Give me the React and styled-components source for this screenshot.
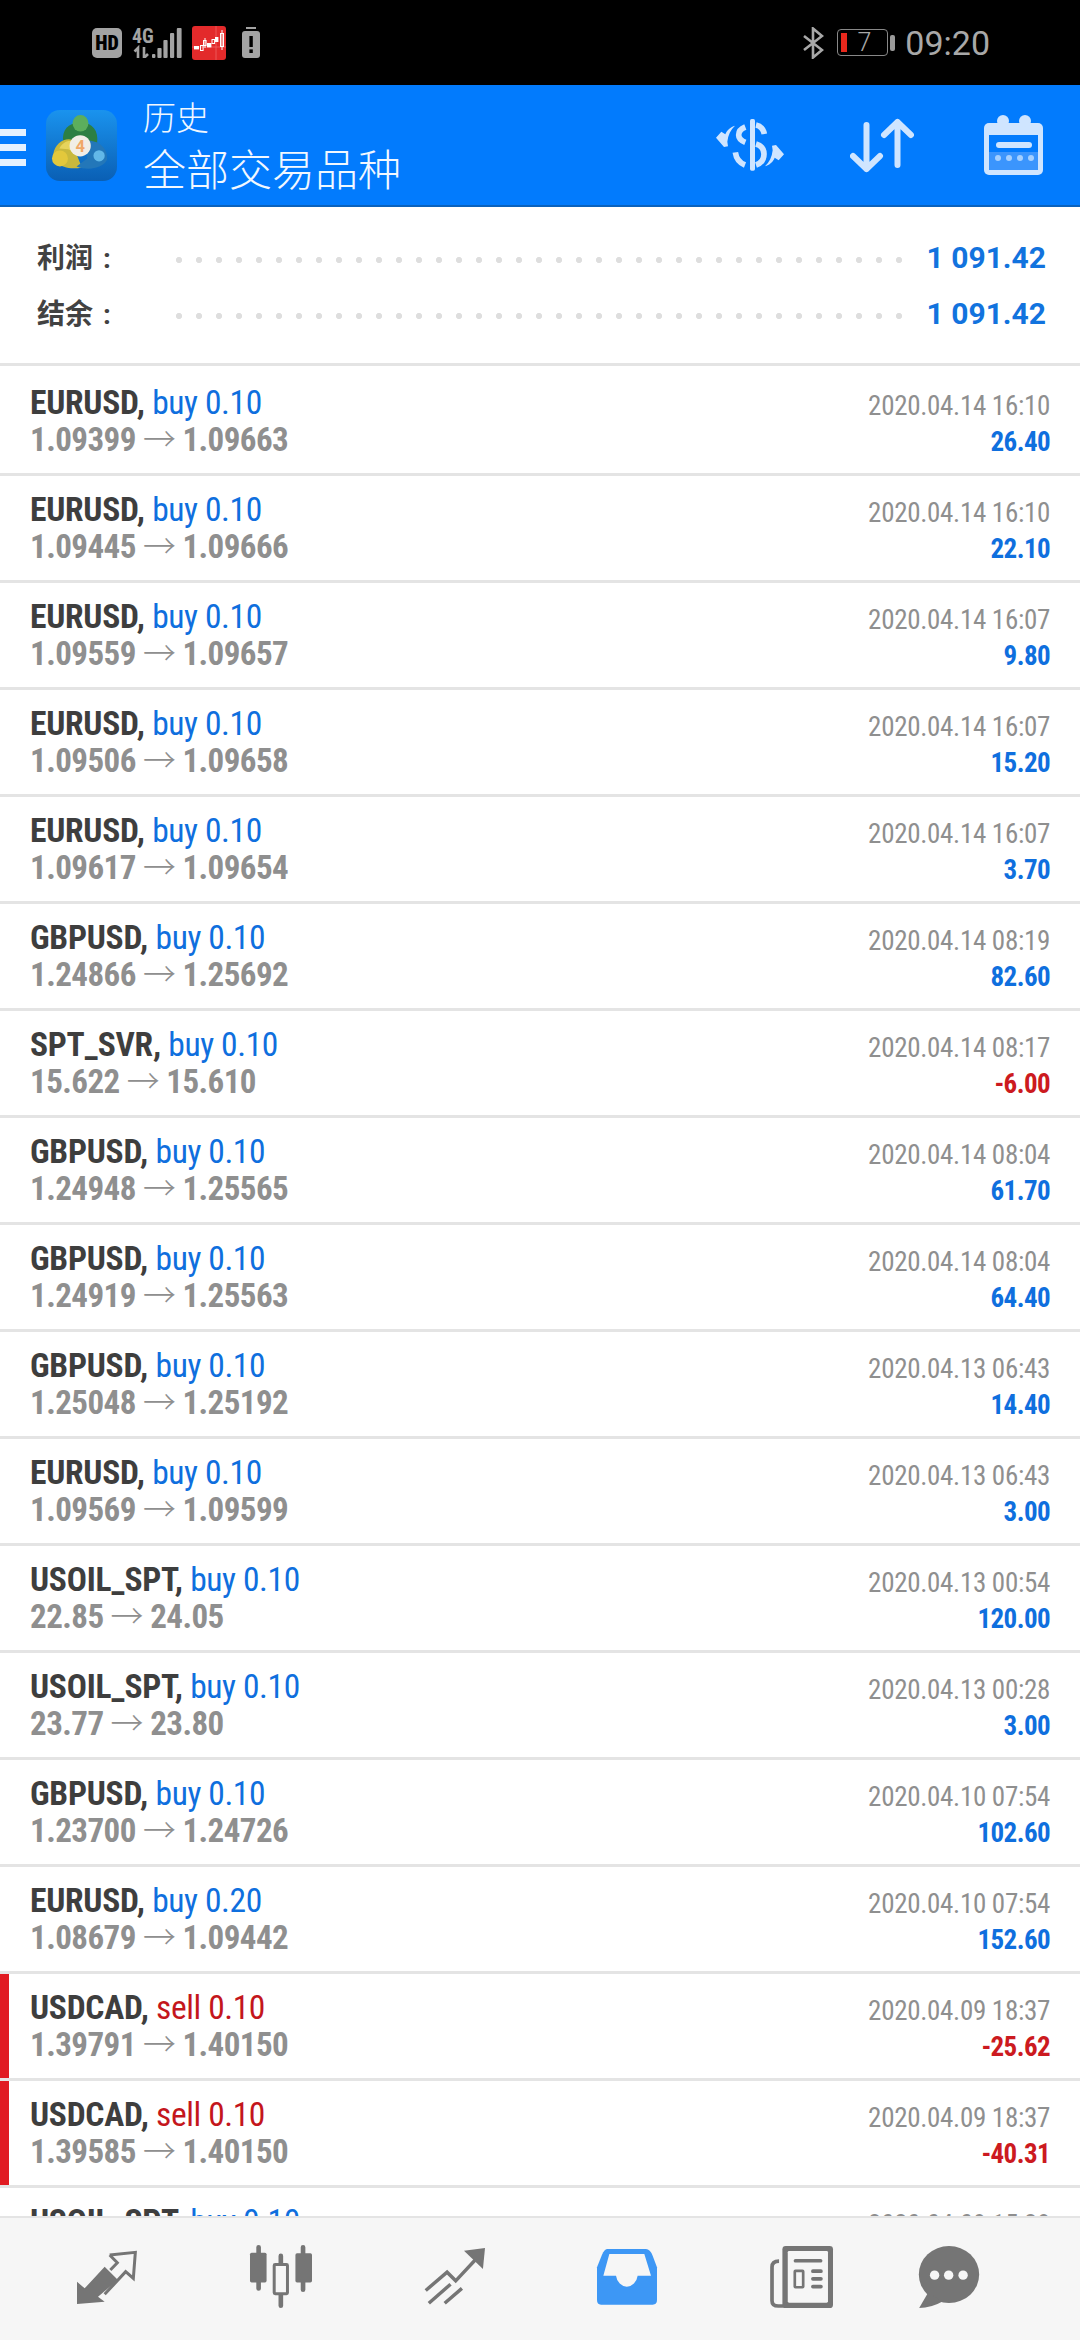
import React from "react";
import styled, { createGlobalStyle } from "styled-components";

const Global = createGlobalStyle`
  html, body { margin: 0; padding: 0; background: #fff; }
  * { box-sizing: border-box; }
`;
const SANS = `Roboto, "Noto Sans CJK SC", sans-serif`;
const HEAD_ICON = "#cfe5ff";
const NAV_GREY = "#757575";
const NAV_BG = "#f6f6f6";
const STATUS_GREY = "#a3a3a3";

const Page = styled.div`
  width: 1080px; height: 2340px; display: flex; flex-direction: column;
  overflow: hidden; background: #fff; font-family: ${SANS};
`;
const StatusBar = styled.div`
  height: 85px; flex: none; background: #000; display: flex; align-items: center;
  justify-content: space-between; padding: 0 90px 0 92px;
`;
const StatusGroup = styled.div`display: flex; align-items: center;`;
const HdBadge = styled.span`
  width: 30px; height: 30px; border-radius: 5px; background: ${STATUS_GREY}; color: #000; margin-right: 10px;
  display: flex; align-items: center; justify-content: center; font-size: 20px; line-height: 1;
  font-weight: 900; font-stretch: 85%;
`;
const Glyph = styled.svg`display: block; flex: none; margin-right: ${p => p.$mr || 0}px; margin-left: ${p => p.$ml || 0}px;`;
const BatteryBody = styled.div`
  width: 51px; height: 27px; border: 1.5px solid #888; border-radius: 4px; padding: 3px; display: flex; align-items: stretch;
`;
const BatteryFill = styled.i`width: 6px; background: #e8281c; display: block; flex: none;`;
const BatteryText = styled.span`
  flex: 1; text-align: center; margin-right: 3px; font-size: 25px; line-height: 19px; font-weight: 300; color: #a8a8a8;
`;
const BatteryTip = styled.i`display: block; width: 5px; height: 16px; margin: 0 10px 0 2px; border-radius: 2px; background: #9a9a9a;`;
const Clock = styled.span`font-size: 34px; color: #a8a8a8; line-height: 1;`;

const Header = styled.header`
  height: 122px; flex: none; background: #027bfd; border-bottom: 2px solid #0a62bd;
  display: flex; align-items: center; color: #fff; padding-right: 37px;
`;
const Burger = styled.div`
  width: 26px; height: 37px; margin: 5px 20px 0 0; display: flex; flex-direction: column; flex: none;
  justify-content: space-between; span { display: block; height: 7px; background: #e4f1ff; }
`;
const LogoSvg = styled.svg`display: block; flex: none; margin-right: 26px;`;
const TitleBlock = styled.div`flex: 1; display: flex; flex-direction: column; padding-top: 6px;`;
const TitleSmall = styled.div`font-size: 33px; line-height: 42px; font-weight: 300; color: #f0f7ff;`;
const TitleBig = styled.div`font-size: 43px; line-height: 54px; margin-top: 4px; font-weight: 300; color: #f2f8ff;`;

const Summary = styled.section`
  height: 156px; flex: none; padding: 22px 0 0 37px; display: flex; flex-direction: column;
`;
const SumRow = styled.div`height: 56px; display: flex; align-items: center;`;
const SumLabel = styled.div`
  width: 132px; flex: none; margin-bottom: 2px; font-size: 28px; font-weight: 700; word-spacing: 3px; color: #424242;
`;
const Dots = styled.div`
  width: 740px; flex: none; height: 6px; margin-top: 6px;
  background-image: radial-gradient(circle, #dedede 2.8px, transparent 3.3px);
  background-size: 20px 6px; background-repeat: repeat-x;
`;
const SumValue = styled.div`
  flex: 1; text-align: right; padding-right: 34px; font-size: 30px; font-weight: 700; color: #1273de;
`;
const List = styled.div`
  flex: 1; min-height: 0; overflow: hidden; border-top: 3px solid #e4e4e4; padding-top: 3px;
`;
const Row = styled.div`
  height: 107px; position: relative; border-bottom: 3px solid #e4e4e4; padding: 0 30px;
  display: flex; justify-content: space-between;
`;
const SellMark = styled.i`position: absolute; left: 0; top: 0; bottom: 0; width: 9px; background: #e11b22;`;
const Col = styled.div`display: flex; flex-direction: column; padding-top: 15px;`;
const RightCol = styled(Col)`align-items: flex-end; padding-top: 20px;`;
const Line1 = styled.div`
  font-size: 33.5px; line-height: 38px; font-stretch: 75%; font-weight: 700; letter-spacing: -0.25px;
  color: #3e3e3e; white-space: nowrap;
`;
const Side = styled.span`font-weight: 400; letter-spacing: -0.4px; color: ${p => p.$sell ? "#c4161c" : "#0f6fde"};`;
const Prices = styled.div`
  font-size: 33px; line-height: 36px; font-stretch: 75%; font-weight: 700; letter-spacing: -0.55px;
  color: #8f8f8f; white-space: nowrap;
`;
const Arrow = styled.span`font-weight: 300;`;
const DateText = styled.div`font-size: 27px; line-height: 34px; font-stretch: 75%; letter-spacing: -0.3px; color: #8f8f8f;`;
const Amount = styled.div`
  font-size: 27px; line-height: 38px; font-stretch: 75%; font-weight: 700; letter-spacing: -0.6px;
  color: ${p => p.$neg ? "#cc1a20" : "#0f6fde"};
`;
const Nav = styled.nav`
  height: 124px; flex: none; background: ${NAV_BG}; border-top: 2px solid #e4e4e4;
  display: flex; align-items: center; padding: 0 0 5px 76px; gap: 111px;
`;

const trades = [
 ["EURUSD","buy","0.10","1.09399","1.09663","2020.04.14 16:10","26.40"],
 ["EURUSD","buy","0.10","1.09445","1.09666","2020.04.14 16:10","22.10"],
 ["EURUSD","buy","0.10","1.09559","1.09657","2020.04.14 16:07","9.80"],
 ["EURUSD","buy","0.10","1.09506","1.09658","2020.04.14 16:07","15.20"],
 ["EURUSD","buy","0.10","1.09617","1.09654","2020.04.14 16:07","3.70"],
 ["GBPUSD","buy","0.10","1.24866","1.25692","2020.04.14 08:19","82.60"],
 ["SPT_SVR","buy","0.10","15.622","15.610","2020.04.14 08:17","-6.00"],
 ["GBPUSD","buy","0.10","1.24948","1.25565","2020.04.14 08:04","61.70"],
 ["GBPUSD","buy","0.10","1.24919","1.25563","2020.04.14 08:04","64.40"],
 ["GBPUSD","buy","0.10","1.25048","1.25192","2020.04.13 06:43","14.40"],
 ["EURUSD","buy","0.10","1.09569","1.09599","2020.04.13 06:43","3.00"],
 ["USOIL_SPT","buy","0.10","22.85","24.05","2020.04.13 00:54","120.00"],
 ["USOIL_SPT","buy","0.10","23.77","23.80","2020.04.13 00:28","3.00"],
 ["GBPUSD","buy","0.10","1.23700","1.24726","2020.04.10 07:54","102.60"],
 ["EURUSD","buy","0.20","1.08679","1.09442","2020.04.10 07:54","152.60"],
 ["USDCAD","sell","0.10","1.39791","1.40150","2020.04.09 18:37","-25.62"],
 ["USDCAD","sell","0.10","1.39585","1.40150","2020.04.09 18:37","-40.31"],
 ["USOIL_SPT","buy","0.10","23.00","23.50","2020.04.09 15:28","5.00"],
];

const NetIcon = () => (
  <Glyph width="50" height="30" viewBox="0 0 50 30" $mr={10}>
    <text x="0" y="15" fontFamily="Roboto" fontWeight="700" fontSize="20" fontStretch="75%" fill={STATUS_GREY}>4G</text>
    <g stroke={STATUS_GREY} strokeWidth="2.6" fill="none">
      <path d="M6 30V20L2.5 23.5" />
      <path d="M12 19V30L16 26" />
    </g>
    <g fill={STATUS_GREY}>
      <rect x="20" y="26" width="3.4" height="4" rx="1" />
      <rect x="25.4" y="20" width="4.2" height="10" rx="1" />
      <rect x="31.4" y="12" width="4.2" height="18" rx="1" />
      <rect x="38" y="5" width="4.2" height="25" rx="1" />
      <rect x="44.8" y="0" width="4.8" height="30" rx="1" />
    </g>
  </Glyph>
);
const ChartAppIcon = () => (
  <Glyph width="34" height="34" viewBox="0 0 34 34" $mr={16}>
    <rect width="34" height="34" rx="3" fill="#e32a2b" />
    <path d="M0 21H34M24 0V34" stroke="#ef6a6a" strokeWidth="0.7" />
    <g fill="#fff">
      <rect x="2" y="20" width="5" height="3.4" />
      <rect x="15" y="17" width="4.4" height="4.4" />
      <rect x="23" y="11" width="3.4" height="5" />
    </g>
    <g fill="none" stroke="#fff" strokeWidth="1">
      <rect x="8.5" y="19.5" width="2.6" height="5" />
      <rect x="11.5" y="14.5" width="2.6" height="5" />
      <rect x="20" y="13.5" width="2.6" height="4" />
      <rect x="28.5" y="7.5" width="3" height="13" />
      <path d="M30 4V24M13 12V22" />
    </g>
  </Glyph>
);
const SaverIcon = () => (
  <Glyph width="18" height="31" viewBox="0 0 18 31">
    <rect x="4" y="0" width="10" height="2" fill={STATUS_GREY} />
    <rect x="0" y="4" width="18" height="27" rx="3" fill={STATUS_GREY} />
    <rect x="7.4" y="9" width="3.4" height="11" fill="#000" />
    <rect x="7.4" y="22.4" width="3.4" height="3.6" fill="#000" />
  </Glyph>
);
const BluetoothIcon = () => (
  <Glyph width="22" height="32" viewBox="0 0 22 32" $mr={13}>
    <path d="M2 9L20 23L11 30.5V1.5L20 9L2 23" fill="none" stroke="#a8a8a8" strokeWidth="2.6" />
  </Glyph>
);
const Logo = () => (
  <LogoSvg width="71" height="71" viewBox="138 32 214 214">
    <defs>
      <linearGradient id="logoBg" x1="0" y1="0" x2="0" y2="1">
        <stop offset="0" stopColor="#1a93ee" />
        <stop offset="1" stopColor="#0a5fb4" />
      </linearGradient>
    </defs>
    <rect x="138" y="32" width="214" height="214" rx="42" fill="url(#logoBg)" />
    <path d="M190 128C184 88 212 68 242 72C272 68 298 90 292 132L262 140H222Z" fill="#2c7f43" />
    <ellipse cx="242" cy="72" rx="24" ry="25" fill="#5cae5c" />
    <path d="M160 165C165 128 205 108 228 128L232 170L246 205C215 212 185 205 172 190Z" fill="#c9b93c" />
    <path d="M178 148C190 126 210 120 222 130L226 160L205 150Z" fill="#e6d45c" />
    <circle cx="180" cy="178" r="24" fill="#e3c83c" />
    <path d="M262 125C298 122 326 150 322 182C310 208 265 216 230 202L262 178Z" fill="#2377b9" />
    <circle cx="298" cy="170" r="17" fill="#62b8e8" />
    <circle cx="241" cy="140" r="32" fill="#f1eee6" />
    <text x="241" y="158" textAnchor="middle" fontFamily="Roboto" fontWeight="700" fontSize="50" fill="#f0a868">4</text>
  </LogoSvg>
);
const DollarIcon = () => (
  <Glyph width="68" height="52" viewBox="48 40 204 156" $mr={66}>
    <g fill="none" stroke={HEAD_ICON} strokeWidth="17">
      <path d="M168 58Q188 62 193 85" />
      <path d="M136 64Q116 72 116 88Q116 102 136 110" />
      <path d="M168 115Q192 122 192 145Q192 170 168 178" />
      <path d="M106 140Q110 168 135 178" />
    </g>
    <rect x="150" y="40" width="15" height="155" rx="5" fill={HEAD_ICON} />
    <g fill={HEAD_ICON}>
      <path d="M105 60C92 64 80 74 76 86L64 78L48 96L72 124L84 122L82 108C84 88 92 72 105 60Z" />
      <path transform="translate(0 8) rotate(180 150 117)" d="M105 60C92 64 80 74 76 86L64 78L48 96L72 124L84 122L82 108C84 88 92 72 105 60Z" />
    </g>
  </Glyph>
);
const SortIcon = () => (
  <Glyph width="64" height="55" viewBox="0 0 64 55" $mr={70}>
    <g fill="none" stroke={HEAD_ICON} strokeWidth="6" strokeLinecap="round" strokeLinejoin="round">
      <path d="M16.5 7V51M3 38L16.5 51L30 38" />
      <path d="M47.5 4V47M34 17L47.5 4L61 17" />
    </g>
  </Glyph>
);
const CalendarIcon = () => (
  <Glyph width="59" height="60" viewBox="0 0 59 60">
    <rect x="0" y="8" width="59" height="52" rx="5" fill={HEAD_ICON} />
    <rect x="5" y="20" width="49" height="35" fill="#027bfd" />
    <circle cx="19" cy="6" r="6" fill={HEAD_ICON} />
    <circle cx="41" cy="6" r="6" fill={HEAD_ICON} />
    <rect x="12" y="27" width="36" height="6" rx="3" fill={HEAD_ICON} />
    <rect x="5" y="37" width="49" height="18" fill="#3b95fd" />
    <g fill="#a5d0ff">
      <circle cx="14" cy="43" r="3" /><circle cx="25" cy="43" r="3" />
      <circle cx="36" cy="43" r="3" /><circle cx="47" cy="43" r="3" />
    </g>
  </Glyph>
);
const TradeNavIcon = () => (
  <Glyph width="62" height="54" viewBox="222 870 180 162">
    <path d="M222 1032V965L245 985L305 920L345 960L285 1010L305 1025Z" fill={NAV_GREY} />
    <path d="M320 885L397 877L391 955L368 935L305 1003M320 885L343 908L322 930" fill="none" stroke={NAV_GREY} strokeWidth="9" />
  </Glyph>
);
const CandlesIcon = () => (
  <Glyph width="64" height="63" viewBox="720 855 187 190">
    <path d="M746 862V986M880 862V990M813 888V1038" stroke={NAV_GREY} strokeWidth="14" strokeLinecap="round" />
    <rect x="720" y="878" width="50" height="90" rx="5" fill={NAV_GREY} />
    <rect x="857" y="880" width="50" height="88" rx="5" fill={NAV_GREY} />
    <rect x="793" y="914" width="40" height="88" rx="3" fill={NAV_BG} stroke={NAV_GREY} strokeWidth="9" />
  </Glyph>
);
const TrendIcon = () => (
  <Glyph width="61" height="57" viewBox="1228 865 177 165">
    <path d="M1233 988L1295 935L1320 960L1390 885" fill="none" stroke={NAV_GREY} strokeWidth="10" />
    <path d="M1344 873L1405 865L1399 926Z" fill={NAV_GREY} />
    <path d="M1242 1025L1305 970M1288 1025L1338 982" fill="none" stroke={NAV_GREY} strokeWidth="10" />
  </Glyph>
);
const TrayIcon = () => (
  <Glyph width="62" height="56" viewBox="163 865 180 168">
    <path d="M195 865H310Q322 865 330 885L343 920V1018Q343 1032 330 1032H175Q163 1032 163 1018V920L178 882Q185 865 195 865Z" fill="#3d97f5" />
    <path d="M200 880H305L325 945H285A33 40 0 0 1 220 945H182Z" fill={NAV_BG} />
  </Glyph>
);
const NewsIcon = () => (
  <Glyph width="65" height="62" viewBox="665 855 188 185" $mr={-27}>
    <path d="M692 900Q671 900 671 918V1018Q671 1034 690 1034H720" fill="none" stroke={NAV_GREY} strokeWidth="11" />
    <rect x="702" y="855" width="151" height="185" rx="10" fill={NAV_GREY} />
    <rect x="718" y="870" width="120" height="154" rx="4" fill={NAV_BG} />
    <path d="M741 899H816M793 930H817M793 953H817M793 976H817" stroke={NAV_GREY} strokeWidth="11" strokeLinecap="round" />
    <rect x="739" y="929" width="25" height="49" rx="2" fill="none" stroke={NAV_GREY} strokeWidth="8" />
  </Glyph>
);
const ChatIcon = () => (
  <Glyph width="62" height="62" viewBox="1098 855 180 185">
    <ellipse cx="1188" cy="940" rx="90" ry="85" fill={NAV_GREY} />
    <path d="M1125 995L1099 1040Q1135 1040 1170 1020Z" fill={NAV_GREY} />
    <circle cx="1145" cy="942" r="14" fill={NAV_BG} />
    <circle cx="1187" cy="942" r="14" fill={NAV_BG} />
    <circle cx="1230" cy="942" r="14" fill={NAV_BG} />
  </Glyph>
);

export default function App() {
  return (
    <Page>
      <Global />
      <StatusBar>
        <StatusGroup>
          <HdBadge>HD</HdBadge>
          <NetIcon />
          <ChartAppIcon />
          <SaverIcon />
        </StatusGroup>
        <StatusGroup>
          <BluetoothIcon />
          <BatteryBody><BatteryFill /><BatteryText>7</BatteryText></BatteryBody>
          <BatteryTip />
          <Clock>09:20</Clock>
        </StatusGroup>
      </StatusBar>
      <Header>
        <Burger><span /><span /><span /></Burger>
        <Logo />
        <TitleBlock><TitleSmall>历史</TitleSmall><TitleBig>全部交易品种</TitleBig></TitleBlock>
        <DollarIcon />
        <SortIcon />
        <CalendarIcon />
      </Header>
      <Summary>
        <SumRow><SumLabel>利润 :</SumLabel><Dots /><SumValue>1 091.42</SumValue></SumRow>
        <SumRow><SumLabel>结余 :</SumLabel><Dots /><SumValue>1 091.42</SumValue></SumRow>
      </Summary>
      <List>
        {trades.map((t, i) => (
          <Row key={i}>
            {t[1] === "sell" && <SellMark />}
            <Col>
              <Line1>{t[0]}, <Side $sell={t[1] === "sell"}>{t[1]} {t[2]}</Side></Line1>
              <Prices>{t[3]} <Arrow>→</Arrow> {t[4]}</Prices>
            </Col>
            <RightCol>
              <DateText>{t[5]}</DateText>
              <Amount $neg={t[6].startsWith("-")}>{t[6]}</Amount>
            </RightCol>
          </Row>
        ))}
      </List>
      <Nav>
        <TradeNavIcon />
        <CandlesIcon />
        <TrendIcon />
        <TrayIcon />
        <NewsIcon />
        <ChatIcon />
      </Nav>
    </Page>
  );
}
